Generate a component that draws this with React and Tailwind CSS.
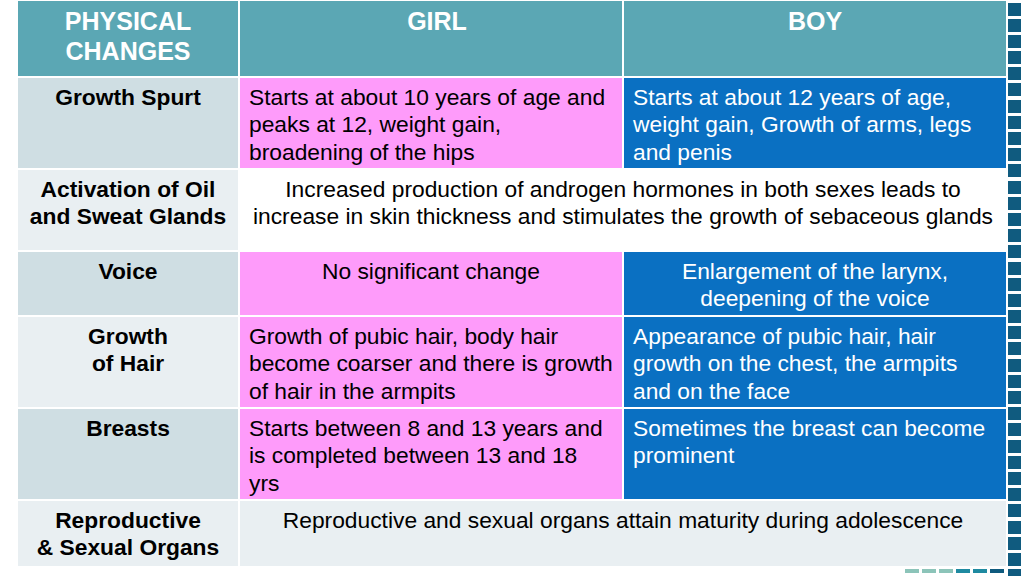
import React from 'react';

const rows = [
  {
    label: ['Growth Spurt'],
    h: 'h-[90px]',
    shade: 'bg-[#cfdee3]',
    girl: ['Starts at about 10 years of age and', 'peaks at 12, weight gain,', 'broadening of the hips'],
    boy: ['Starts at about 12 years of age,', 'weight gain, Growth of arms, legs', 'and penis'],
  },
  {
    label: ['Activation of Oil', 'and Sweat Glands'],
    h: 'h-[80px]',
    shade: 'bg-[#e9eff2]',
    both: ['Increased production of androgen hormones in both sexes leads to', 'increase in skin thickness and stimulates the growth of sebaceous glands'],
    bothBg: 'bg-white',
  },
  {
    label: ['Voice'],
    h: 'h-[63px]',
    shade: 'bg-[#cfdee3]',
    girl: ['No significant change'],
    boy: ['Enlargement of the larynx,', 'deepening of the voice'],
    center: true,
  },
  {
    label: ['Growth', 'of Hair'],
    h: 'h-[90px]',
    shade: 'bg-[#e9eff2]',
    girl: ['Growth of pubic hair, body hair', 'become coarser and there is growth', 'of hair in the armpits'],
    boy: ['Appearance of pubic hair, hair', 'growth on the chest, the armpits', 'and on the face'],
  },
  {
    label: ['Breasts'],
    h: 'h-[90px]',
    shade: 'bg-[#cfdee3]',
    girl: ['Starts between 8 and 13 years and', 'is completed between 13 and 18', 'yrs'],
    boy: ['Sometimes the breast can become', 'prominent'],
  },
  {
    label: ['Reproductive', '& Sexual Organs'],
    h: 'h-[65px]',
    shade: 'bg-[#e9eff2]',
    both: ['Reproductive and sexual organs attain maturity during adolescence'],
    bothBg: 'bg-[#e9eff2]',
  },
];

const Lines = ({ lines }) => (
  <>
    {lines.map((l, i) => (
      <div key={i} className="whitespace-nowrap">{l}</div>
    ))}
  </>
);

const App = () => {
  return (
    <div
      className="w-[1024px] h-[576px] bg-white overflow-hidden flex pl-[18px] pt-[1px]"
      style={{ fontFamily: '"Liberation Sans", Arial, sans-serif' }}
    >
      <div className="w-[988px] flex flex-col">
        <div className="grid grid-cols-[220px_382px_382px] gap-[2px]">
          <div className="h-[75px] bg-[#5ba7b4] text-white font-bold text-[25px] leading-[30px] text-center pt-[5px]">
            PHYSICAL<br />CHANGES
          </div>
          <div className="h-[75px] bg-[#5ba7b4] text-white font-bold text-[25px] leading-[30px] text-center pt-[5px] pl-[12px]">
            GIRL
          </div>
          <div className="h-[75px] bg-[#5ba7b4] text-white font-bold text-[25px] leading-[30px] text-center pt-[5px]">
            BOY
          </div>

          {rows.map((r, i) => (
            <React.Fragment key={i}>
              <div className={`${r.h} ${r.shade} font-bold text-[22.8px] leading-[27.5px] text-center text-black pt-[5.5px]`}>
                <Lines lines={r.label} />
              </div>
              {r.both ? (
                <div className={`${r.h} ${r.bothBg} col-span-2 text-[22.8px] leading-[27.5px] text-center text-black pt-[5.5px]`}>
                  <Lines lines={r.both} />
                </div>
              ) : (
                <>
                  <div className={`${r.h} bg-[#fe9bfa] text-[22.8px] leading-[27.5px] text-black pt-[5.5px] ${r.center ? 'text-center' : 'pl-[9px]'}`}>
                    <Lines lines={r.girl} />
                  </div>
                  <div className={`${r.h} bg-[#0a70c2] text-[22.8px] leading-[27.5px] text-white pt-[5.5px] ${r.center ? 'text-center' : 'pl-[9px]'}`}>
                    <Lines lines={r.boy} />
                  </div>
                </>
              )}
            </React.Fragment>
          ))}
        </div>
        <div className="flex justify-end gap-[3px] pr-[2px] mt-[3px]">
          <div className="w-[14px] h-[4px] bg-[#8cc4b9]" />
          <div className="w-[14px] h-[4px] bg-[#8cc4b9]" />
          <div className="w-[14px] h-[4px] bg-[#8cc4b9]" />
          <div className="w-[14px] h-[4px] bg-[#1f8aa1]" />
          <div className="w-[14px] h-[4px] bg-[#1f8aa1]" />
          <div className="w-[14px] h-[4px] bg-[#0e5a7e]" />
        </div>
      </div>
      <div className="ml-[2px] w-[13px] flex flex-col gap-[3.2px] pt-[1.5px]">
        {Array.from({ length: 36 }).map((_, i) => (
          <div key={i} className="w-[13px] h-[13px] shrink-0 bg-[#105b7f]" />
        ))}
      </div>
    </div>
  );
};

export default App;
